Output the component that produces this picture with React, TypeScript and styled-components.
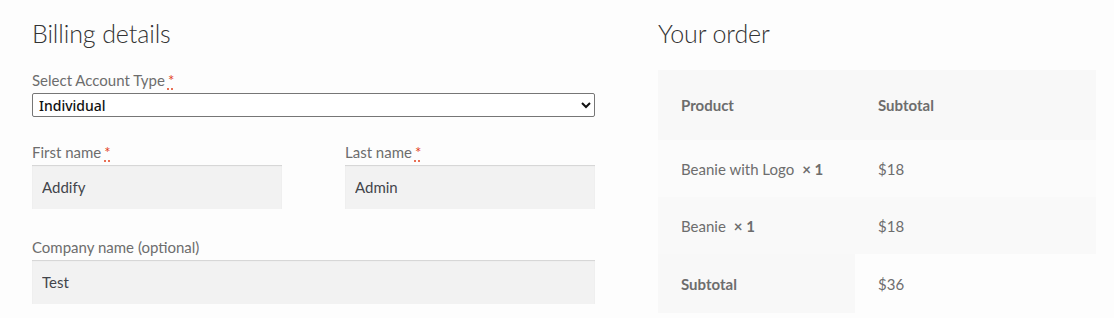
import * as React from 'react';
import styled, { createGlobalStyle } from 'styled-components';

const GlobalStyle = createGlobalStyle`
    body {
        margin: 0;
        background: #fdfdfd;
        font-family: Lato, "Liberation Sans", sans-serif;
        color: #6d6d6d;
    }
`;

const Page = styled.div`
    display: grid;
    grid-template-columns: 563px 438px;
    column-gap: 63px;
    padding: 16px 0 0 32px;
`;

const Heading = styled.h3`
    margin: 0 0 20px;
    font-weight: 300;
    font-size: 25px;
    line-height: 34px;
    color: #333333;
    letter-spacing: -0.1px;
`;

const Field = styled.div<{ $gap?: number }>`
    display: flex;
    flex-direction: column;
    margin-bottom: ${p => p.$gap ?? 0}px;
`;

const Label = styled.label`
    font-size: 15px;
    line-height: 20px;
    margin-bottom: 3px;
`;

const Req = styled.abbr`
    color: #e2401c;
    text-decoration: underline dotted;
    text-underline-offset: 3px;
    margin-left: 3px;
`;

const Select = styled.select`
    height: 24px;
    font-family: "Noto Sans", "Liberation Sans", sans-serif;
    font-size: 14px;
    font-weight: 500;
    color: #111;
    background: #fff;
    border: 1px solid #767676;
    border-radius: 2px;
    padding: 0 2px;
`;

const Row = styled.div`
    display: grid;
    grid-template-columns: 250px 250px;
    justify-content: space-between;
    margin-bottom: 28px;
`;

const Input = styled.input`
    box-sizing: border-box;
    height: 44px;
    border: 0;
    box-shadow: inset 0 1px 1px rgba(0, 0, 0, 0.125);
    background: #f2f2f2;
    padding: 0 10px;
    font-family: Lato, "Liberation Sans", sans-serif;
    font-size: 15px;
    color: #43454b;
    outline: none;
`;

const Table = styled.table`
    border-collapse: collapse;
    table-layout: fixed;
    width: 438px;
`;

const Th = styled.th<{ $bg?: string; $h?: number }>`
    text-align: left;
    font-weight: 700;
    font-size: 15px;
    color: #6d6d6d;
    padding: 0 23px;
    height: ${p => p.$h ?? 57}px;
    background: ${p => p.$bg ?? 'transparent'};
`;

const Td = styled.td<{ $bg?: string; $h?: number }>`
    font-size: 15px;
    padding: 0 23px;
    height: ${p => p.$h ?? 57}px;
    background: ${p => p.$bg ?? 'transparent'};
`;

const Qty = styled.strong`
    margin-left: 8px;
    font-weight: 700;
`;

const items = [
    { name: 'Beanie with Logo', qty: 1, price: '$18', bg: '#fbfbfb' },
    { name: 'Beanie', qty: 1, price: '$18', bg: '#f9f9f9' },
];

export default function App()
{
    return (
        <>
            <GlobalStyle />
            <Page>
                <section>
                    <Heading>Billing details</Heading>
                    <Field $gap={25}>
                        <Label>Select Account Type<Req title="required">*</Req></Label>
                        <Select defaultValue="Individual">
                            <option>Individual</option>
                            <option>Business</option>
                        </Select>
                    </Field>
                    <Row>
                        <Field>
                            <Label>First name<Req title="required">*</Req></Label>
                            <Input defaultValue="Addify" />
                        </Field>
                        <Field>
                            <Label>Last name<Req title="required">*</Req></Label>
                            <Input defaultValue="Admin" />
                        </Field>
                    </Row>
                    <Field>
                        <Label>Company name (optional)</Label>
                        <Input defaultValue="Test" />
                    </Field>
                </section>
                <section>
                    <Heading>Your order</Heading>
                    <Table>
                        <colgroup>
                            <col style={{ width: 197 }} />
                            <col />
                        </colgroup>
                        <thead>
                            <tr>
                                <Th $bg="#f8f8f8" $h={70}>Product</Th>
                                <Th $bg="#f8f8f8" $h={70}>Subtotal</Th>
                            </tr>
                        </thead>
                        <tbody>
                            {items.map(item => (
                                <tr key={item.name}>
                                    <Td $bg={item.bg}>{item.name}<Qty>× {item.qty}</Qty></Td>
                                    <Td $bg={item.bg}>{item.price}</Td>
                                </tr>
                            ))}
                        </tbody>
                        <tfoot>
                            <tr>
                                <Th $bg="#f8f8f8" $h={59}>Subtotal</Th>
                                <Td $h={59}>$36</Td>
                            </tr>
                        </tfoot>
                    </Table>
                </section>
            </Page>
        </>
    );
}
